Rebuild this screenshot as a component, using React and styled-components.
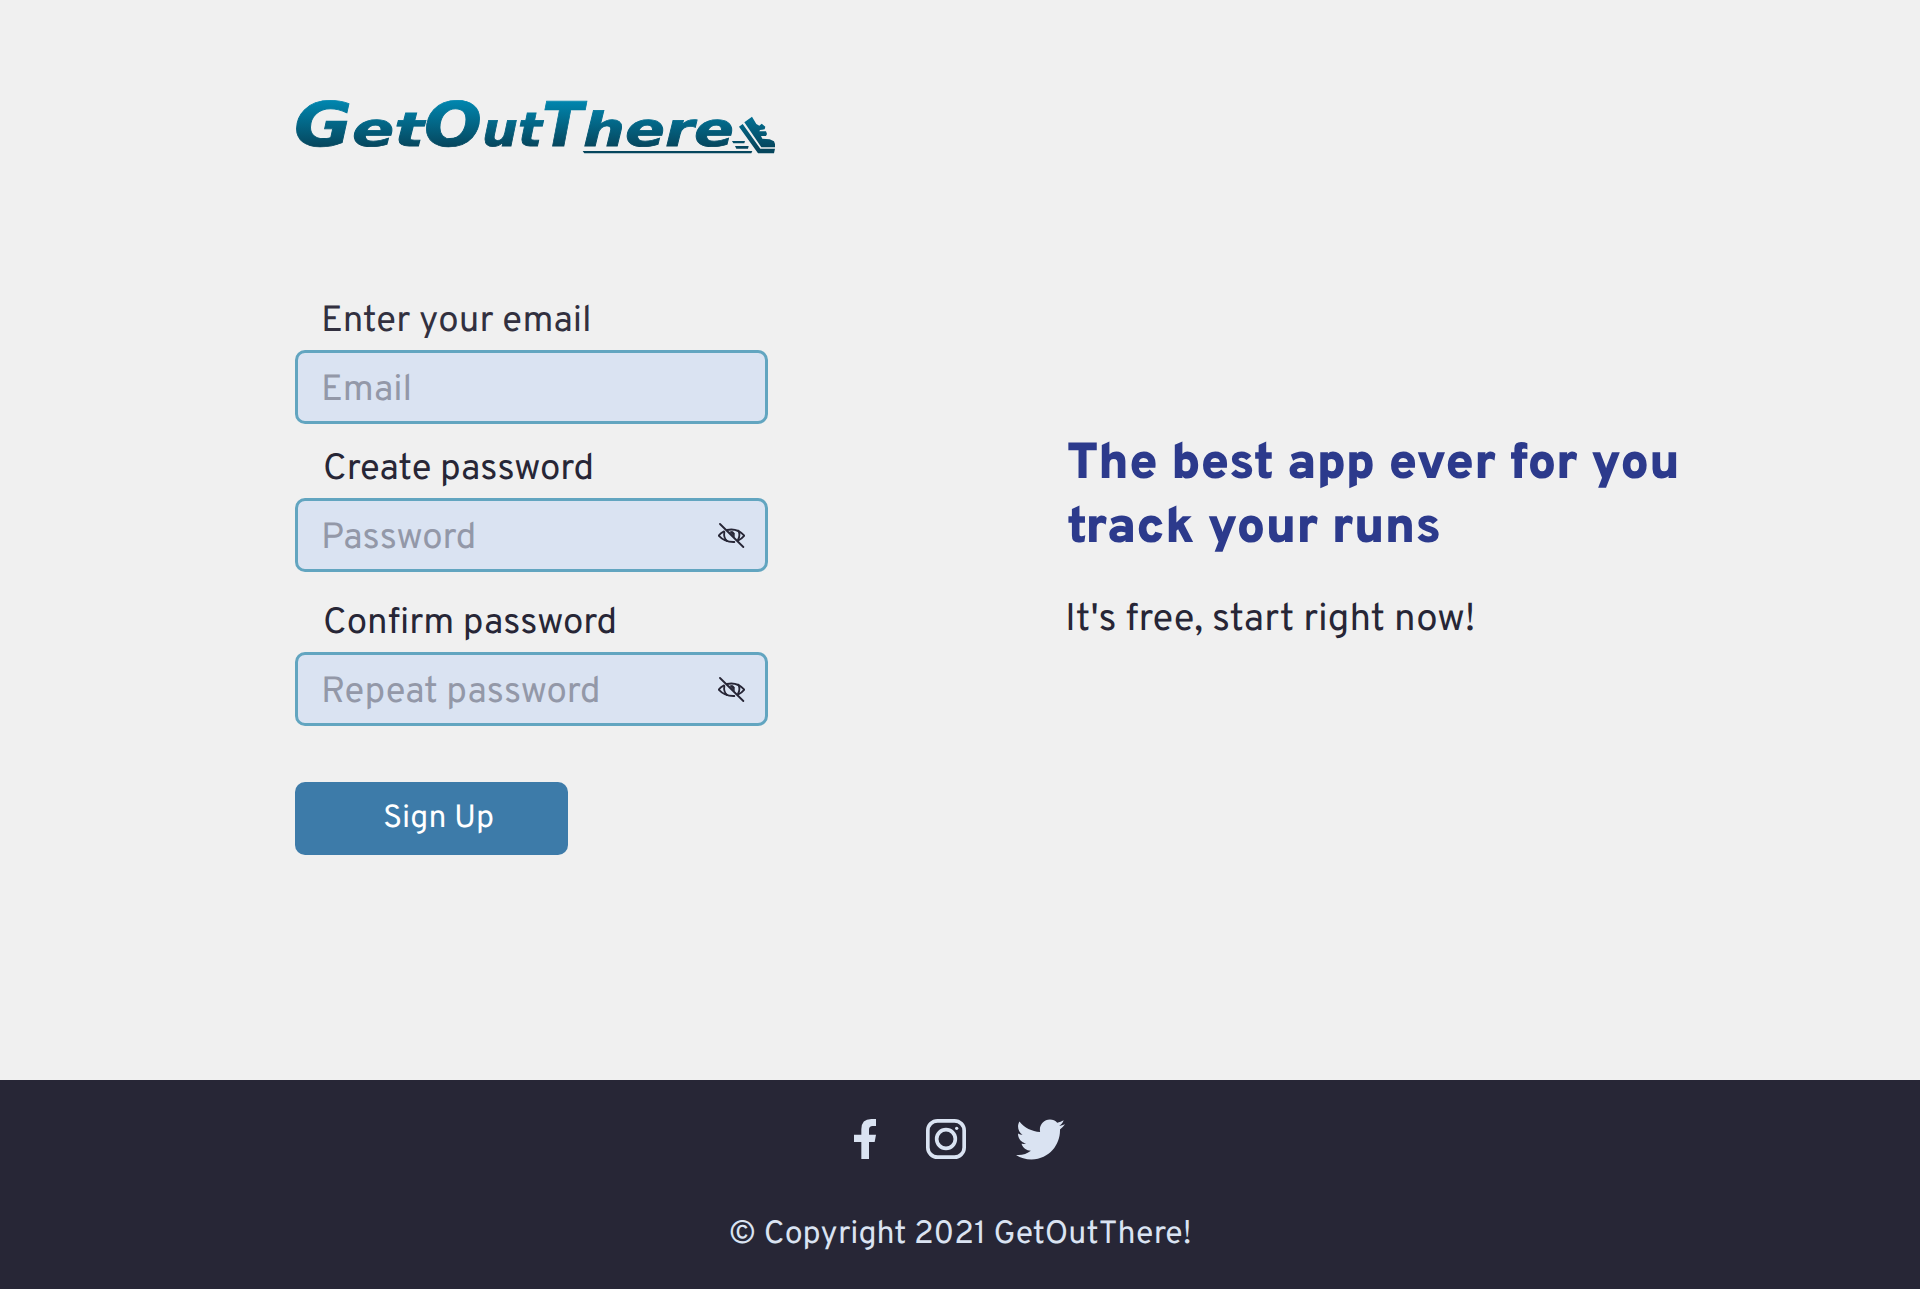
import React from 'react';
import styled, { createGlobalStyle } from 'styled-components';
import { FaTwitter } from 'react-icons/fa';

const GlobalStyle = createGlobalStyle`
  * { box-sizing: border-box; }
  body {
    margin: 0;
    background: #f0f0f0;
    color: #272636;
    font-family: Overpass, Roboto, "Liberation Sans", sans-serif;
    text-rendering: geometricPrecision;
  }
`;

const Page = styled.div`
  display: flex;
  flex-direction: column;
  min-height: 1289px;
`;

const Main = styled.main`
  display: grid;
  grid-template-columns: 772px 1fr;
  height: 1080px;
  padding: 99px 0 0 295px;
`;

const SignUp = styled.section`
  display: flex;
  flex-direction: column;
  align-items: flex-start;
`;

const LogoSvg = styled.svg`
  display: block;
  width: 484px;
  height: 56px;
  margin-bottom: 146px;
  flex: none;
  overflow: visible;
`;

const Wordmark = styled.text`
  font-family: "DejaVu Sans", sans-serif;
  font-size: 61.5px;
  font-weight: 700;
  font-style: oblique;
  stroke-width: 0.8px;
`;

const Small = styled.tspan`
  font-size: 47px;
`;

const Form = styled.form`
  display: flex;
  flex-direction: column;
  align-items: flex-start;
  margin: 0;
`;

const Field = styled.div`
  width: 473px;
  margin-bottom: ${(p) => p.$after}px;
`;

const Label = styled.label`
  display: block;
  padding: 1px 0 6px ${(p) => p.$indent}px;
  font-size: 36.6px;
  line-height: 42px;
  white-space: nowrap;
  color: ${(p) => p.$color || '#272636'};
`;

const InputBox = styled.div`
  display: flex;
  align-items: center;
  height: 74px;
  padding: 0 20px 0 23px;
  border: 3px solid #62a5c0;
  border-radius: 10px;
  background: #dae3f2;
`;

const Input = styled.input`
  flex: 1;
  min-width: 0;
  height: 68px;
  padding: 10px 0 0;
  border: 0;
  outline: 0;
  background: transparent;
  font: inherit;
  font-size: 36.6px;
  text-rendering: inherit;
  color: #272636;
  &::placeholder { color: #9398a8; opacity: 1; }
`;

const EyeButton = styled.button`
  display: flex;
  padding: 0;
  border: 0;
  background: none;
`;

const Submit = styled.button`
  width: 273px;
  height: 73px;
  margin-top: 2px;
  padding: 2px 0 0 14px;
  border: 0;
  border-radius: 10px;
  background: #3d7ba9;
  color: #fff;
  font: inherit;
  font-size: 32px;
  text-rendering: inherit;
`;

const Pitch = styled.section`
  padding-top: 335px;
`;

const Headline = styled.h1`
  margin: 0;
  font-size: 50.6px;
  line-height: 64px;
  font-weight: 900;
  white-space: nowrap;
  color: #2c3a8c;
`;

const Line = styled.span`
  display: block;
`;

const Lead = styled.p`
  margin: 38px 0 0 -2px;
  font-size: 38.4px;
  line-height: 42px;
  white-space: nowrap;
`;

const Footer = styled.footer`
  display: flex;
  flex-direction: column;
  align-items: center;
  height: 209px;
  padding-top: 39px;
  background: #272636;
  color: #dae3f2;
`;

const Social = styled.nav`
  display: flex;
  align-items: center;
  height: 40px;
  gap: 50px;
  margin-right: 1px;
`;

const SocialLink = styled.a`
  display: flex;
  align-items: center;
  color: inherit;
`;

const Copyright = styled.p`
  margin: 58px 0 0;
  font-size: 32.2px;
  line-height: 38px;
  white-space: nowrap;
`;

const fit = (x, width) => ({ x, textLength: width, lengthAdjust: 'spacingAndGlyphs' });

function Logo() {
  return (
    <LogoSvg viewBox="0 0 484 56" role="img" aria-label="GetOutThere">
      <defs>
        <linearGradient id="ink" gradientUnits="userSpaceOnUse" x1="0" y1="1" x2="0" y2="48">
          <stop offset="0" stopColor="#0087b0" />
          <stop offset="1" stopColor="#06465d" />
        </linearGradient>
        <linearGradient id="shoe" gradientUnits="userSpaceOnUse" x1="0" y1="60" x2="0" y2="204">
          <stop offset="0" stopColor="#0087b0" />
          <stop offset="1" stopColor="#06465d" />
        </linearGradient>
      </defs>
      <Wordmark y="46.5" fill="url(#ink)" stroke="url(#ink)">
        <tspan {...fit(-1, 58)}>G</tspan>
        <Small {...fit(57, 72)}>et</Small>
        <tspan {...fit(129, 58)}>O</tspan>
        <Small {...fit(187, 60)}>ut</Small>
        <tspan {...fit(247, 41)}>T</tspan>
        <Small {...fit(288, 151)}>here</Small>
      </Wordmark>
      <g fill="url(#shoe)" transform="translate(235 -19) scale(.33333)">
        <path d="M158 213H667L664 220H163Z" />
        <path d="M606 183H645L643 190H610ZM615 198H656L654 206H619Z" />
        <path d="M643 127L666 110L679 132L688 137L695 131L706 140L704 148L690 150L688 154H708L711 162L708 168H693L697 176L719 178L732 184L735 192V202H694Z" />
        <path d="M627 140L638 132L691 206H735L732 220H684Z" />
      </g>
    </LogoSvg>
  );
}

function EyeOff() {
  return (
    <svg width="27" height="25" viewBox="0 0 81 75" fill="none" stroke="#272636" strokeWidth="5.5" strokeLinecap="round">
      <path d="M6 3L76 72" />
      <path d="M18 25Q8 30 2 38Q20 58 49 57" />
      <path d="M27 21Q57 14 79 38Q70 49 61 52" />
      <path d="M19 27Q16 44 27 54" />
      <path d="M61 23Q68 37 60 50" />
      <path d="M35 27Q44 22 49 30V42Z" fill="#272636" strokeWidth="2" />
    </svg>
  );
}

function Facebook() {
  return (
    <svg width="22" height="40" viewBox="0 0 66 120" fill="currentColor">
      <path d="M22 120V69H0V47H22V31Q22 0 52 0H66V21H56Q45 21 45 32V47H66L62 69H45V120Z" />
    </svg>
  );
}

function Instagram() {
  return (
    <svg width="40" height="40" viewBox="0 0 120 120" fill="none" stroke="currentColor" strokeWidth="11">
      <rect x="5.5" y="5.5" width="109" height="109" rx="29" />
      <circle cx="60" cy="60" r="28" />
      <circle cx="92" cy="28" r="5" fill="currentColor" stroke="none" />
    </svg>
  );
}

export default function App() {
  return (
    <>
      <GlobalStyle />
      <Page>
        <Main>
          <SignUp>
            <Logo />
            <Form>
              <Field $after={25}>
                <Label htmlFor="email" $indent={26} $color="#32303f">Enter your email</Label>
                <InputBox>
                  <Input id="email" placeholder="Email" />
                </InputBox>
              </Field>
              <Field $after={31}>
                <Label htmlFor="password" $indent={28}>Create password</Label>
                <InputBox>
                  <Input id="password" type="password" placeholder="Password" />
                  <EyeButton type="button" aria-label="Show password"><EyeOff /></EyeButton>
                </InputBox>
              </Field>
              <Field $after={54}>
                <Label htmlFor="confirm" $indent={28}>Confirm password</Label>
                <InputBox>
                  <Input id="confirm" type="password" placeholder="Repeat password" />
                  <EyeButton type="button" aria-label="Show password"><EyeOff /></EyeButton>
                </InputBox>
              </Field>
              <Submit type="button">Sign Up</Submit>
            </Form>
          </SignUp>
          <Pitch>
            <Headline>
              <Line>The best app ever for you</Line>
              <Line>track your runs</Line>
            </Headline>
            <Lead>It's free, start right now!</Lead>
          </Pitch>
        </Main>
        <Footer>
          <Social>
            <SocialLink aria-label="Facebook"><Facebook /></SocialLink>
            <SocialLink aria-label="Instagram"><Instagram /></SocialLink>
            <SocialLink aria-label="Twitter"><FaTwitter size={49} /></SocialLink>
          </Social>
          <Copyright>© Copyright 2021 GetOutThere!</Copyright>
        </Footer>
      </Page>
    </>
  );
}
